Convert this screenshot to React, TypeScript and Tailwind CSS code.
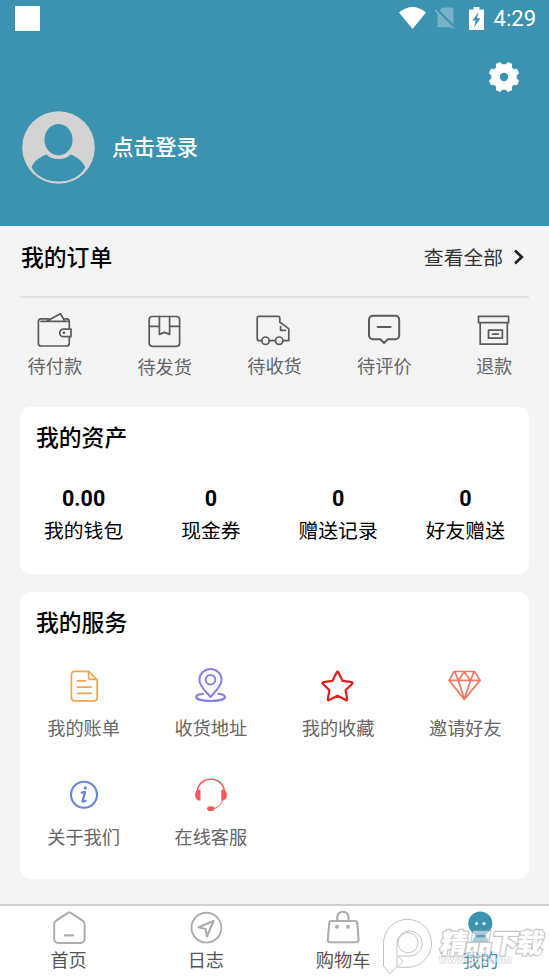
import type { ReactNode } from "react";

type Item = { label: string; icon: ReactNode };

function Icon({ className = "", children }: { className?: string; children: ReactNode }) {
  return (
    <svg
      viewBox="0 0 36 36"
      className={`block size-9 ${className}`}
      fill="none"
      stroke="currentColor"
      strokeWidth="1.7"
      strokeLinejoin="round"
      strokeLinecap="round"
    >
      {children}
    </svg>
  );
}

const orders: Item[] = [
  {
    label: "待付款",
    icon: (
      <Icon>
        <path d="M32.3 17V9.6a2.8 2.8 0 0 0-2.8-2.8H28M12 6.8H4.2a2.8 2.8 0 0 0-2.8 2.8v21.6A2.8 2.8 0 0 0 4.2 34h25.3a2.8 2.8 0 0 0 2.8-2.8v-6.5" />
        <path d="M4 9.4h28.2M9.6 9.2l13.8-7.4 4.4 7.2" />
        <path d="M34 17.1h-7.5a3.8 3.8 0 0 0 0 7.6H34z" />
        <circle cx="26.9" cy="20.8" r="1.3" fill="currentColor" stroke="none" />
      </Icon>
    ),
  },
  {
    label: "待发货",
    icon: (
      <Icon>
        <rect x="2.2" y="4.5" width="30.4" height="29.8" rx="3" />
        <path d="M2.4 14.3h9.9M22.6 14.3h9.9M12.4 4.6v17.8l5.1-2 5.1 2V4.6" />
      </Icon>
    ),
  },
  {
    label: "待收货",
    icon: (
      <Icon>
        <path d="M5.8 28.7H3.2a2 2 0 0 1-2-2V5.9a1.5 1.5 0 0 1 1.5-1.5h19.6a1.5 1.5 0 0 1 1.5 1.5v4.4l8 5.6a2 2 0 0 1 1 1.8v11h-5.8M13.2 28.7h6.3" />
        <circle cx="9.5" cy="28.7" r="3.7" />
        <circle cx="23.2" cy="28.7" r="3.7" />
        <path d="M24.6 14.6v3.7h4.9" />
      </Icon>
    ),
  },
  {
    label: "待评价",
    icon: (
      <Icon>
        <path
          strokeWidth="2"
          d="M7 3.7h22.2a4 4 0 0 1 4 4v15.6a4 4 0 0 1-4 4h-7.4L18.1 31l-3.7-3.7H7a4 4 0 0 1-4-4V7.7a4 4 0 0 1 4-4z"
        />
        <path strokeWidth="2" d="M11.6 15h13" />
      </Icon>
    ),
  },
  {
    label: "退款",
    icon: (
      <Icon>
        <path d="M2.5 4.4h30.1v6.3H2.5zM4.2 10.7v21.5h27.1V10.7" />
        <path d="M12.5 18.2h13.9v8H12.5zM16.6 22.2h5.6" />
      </Icon>
    ),
  },
];

const assets = [
  { value: "0.00", label: "我的钱包" },
  { value: "0", label: "现金券" },
  { value: "0", label: "赠送记录" },
  { value: "0", label: "好友赠送" },
];

const services: Item[] = [
  {
    label: "我的账单",
    icon: (
      <Icon className="text-[#f0a552]">
        <path d="M22.6 3.4H8.4a3 3 0 0 0-3 3v23.4a3 3 0 0 0 3 3h19.8a3 3 0 0 0 3-3V11.8z" />
        <path d="M22.6 3.6v6.2a1.6 1.6 0 0 0 1.6 1.6h6.6M11.4 12.8h8M11.4 19.1h13.8M11.4 25.4h13.8" />
      </Icon>
    ),
  },
  {
    label: "收货地址",
    icon: (
      <Icon className="text-[#8583e8]">
        <path strokeWidth="2" d="M17.5 29C13 23.6 6.4 18 6.4 11.9a11.1 10.8 0 0 1 22.2 0C28.600 18 22 23.600 17.500 29z" />
        <circle cx="17.5" cy="11.7" r="4.8" strokeWidth="2" />
        <path
          strokeWidth="2.2"
          d="M9.8 25.800c-4 .4-6.600 1.700-6.600 3.300 0 2.300 6.400 3.900 14.400 3.900s14.400-1.600 14.400-3.900c0-1.600-2.600-2.900-6.600-3.300"
        />
      </Icon>
    ),
  },
  {
    label: "我的收藏",
    icon: (
      <Icon className="text-[#e11d1d]">
        <path
          strokeWidth="2.2"
          d="M16.7 4.3q.8-1.300 1.600 0l4.200 8.500 9.200 1.400q1.500.4.500 1.600l-6.600 6.500 1.600 8.800q.1 1.500-1.400 1l-8.300-4.300-8.300 4.300q-1.500.5-1.400-1l1.600-8.800-6.600-6.500q-1-1.200.5-1.600l9.200-1.400z"
        />
      </Icon>
    ),
  },
  {
    label: "邀请好友",
    icon: (
      <Icon className="text-[#ef7b67]">
        <path d="M7 3.5h20.4l5.700 8.900-15.800 19L2.200 12.400z" />
        <path d="M2.200 12.400h30.900M7.600 3.700l3.800 8.700 5.900-8.700 6.200 8.700 3.500-8.700M11.400 12.400l5.900 18.600 6.200-18.600" />
      </Icon>
    ),
  },
  {
    label: "关于我们",
    icon: (
      <Icon className="text-[#6484dd]">
        <circle cx="18" cy="17.7" r="13" strokeWidth="2.1" />
        <circle cx="19.3" cy="10.9" r="1.7" fill="currentColor" stroke="none" />
        <path strokeWidth="2.2" d="M15.700 15.600l3.400-.7-2.500 9.200q-.2 1.500 2.900-.3" />
      </Icon>
    ),
  },
  {
    label: "在线客服",
    icon: (
      <Icon className="text-[#f35b5b]">
        <path strokeWidth="1.6" d="M4.300 14.500a13.500 12.200 0 0 1 27 0" />
        <path
          fill="currentColor"
          stroke="none"
          d="M7.500 12.800v10.700H5.300C3.300 22.600 2.100 20.600 2.100 18s1.200-4.600 3.200-5.200zM28.300 12.800v10.700h2.200c2-.9 3.400-2.900 3.400-5.500s-1.400-4.600-3.400-5.200z"
        />
        <path strokeWidth="1" d="M29.200 23c-.7 4.200-3.500 7.200-8 8.500" />
        <ellipse cx="17.8" cy="31.7" rx="3.7" ry="2.4" fill="currentColor" stroke="none" />
      </Icon>
    ),
  },
];

const tabs: Item[] = [
  {
    label: "首页",
    icon: (
      <Icon className="text-[#adadad]">
        <path
          strokeWidth="2"
          d="M16.200 3.300a4 4 0 0 1 4.400 0l11 7.300a4 4 0 0 1 2 3.400v14.900a4 4 0 0 1-4 4H7.200a4 4 0 0 1-4-4V14a4 4 0 0 1 2-3.400z"
        />
        <path strokeWidth="2.2" d="M14 25.300h8" />
      </Icon>
    ),
  },
  {
    label: "日志",
    icon: (
      <Icon className="text-[#adadad]">
        <circle cx="18.4" cy="17.7" r="14.9" strokeWidth="1.9" />
        <path strokeWidth="2.2" d="M25.500 11L10.700 17.300l6.900 1.700 1.300 7.500z" />
      </Icon>
    ),
  },
  {
    label: "购物车",
    icon: (
      <Icon className="text-[#adadad]">
        <path
          strokeWidth="2.100"
          d="M6.300 11h24a2 2 0 0 1 2 1.800l1.300 17.200a2 2 0 0 1-2 2.200H4.800a2 2 0 0 1-2-2.200l1.500-17.200a2 2 0 0 1 2-1.800z"
        />
        <path strokeWidth="2.100" d="M12.300 11V7.300a5.600 5.600 0 0 1 11.200 0V11" />
        <circle cx="12" cy="16.800" r="2" fill="currentColor" stroke="none" />
        <circle cx="23" cy="16.800" r="2" fill="currentColor" stroke="none" />
      </Icon>
    ),
  },
  {
    label: "我的",
    icon: (
      <Icon className="text-[#3b93b0]">
        <circle cx="18.300" cy="13.400" r="12" fill="currentColor" stroke="none" />
        <path
          fill="currentColor"
          stroke="none"
          d="M12.500 23h11.600v3.500l2 3.500q.4 1.600-1.200 1.600H11.800q-1.600 0-1.200-1.600l1.900-3.500z"
        />
        <circle cx="14.500" cy="13.600" r="1.600" fill="#e4f6fc" stroke="none" />
        <circle cx="22" cy="13.600" r="1.600" fill="#e4f6fc" stroke="none" />
      </Icon>
    ),
  },
];

// eight teeth, each a short outer edge between two root points
const gearPoints = Array.from({ length: 8 }, (_, i) => {
  const mid = 22.5 + i * 45;
  return [
    [mid - 15, 12.3],
    [mid - 8, 15],
    [mid + 8, 15],
    [mid + 15, 12.3],
  ]
    .map(([deg, r]) => {
      const a = (deg * Math.PI) / 180;
      return `${(15 + r * Math.cos(a)).toFixed(2)},${(15 + r * Math.sin(a)).toFixed(2)}`;
    })
    .join(" ");
}).join(" ");

function StatusBar() {
  return (
    <div className="flex h-9 items-center pl-[15px] pr-[13px]">
      <div className="size-[25px] bg-white" />
      <svg viewBox="0 0 27 22" className="ml-auto h-[22px] w-[27px]" fill="white">
        <path d="M0 5.500Q13.500-5.500 27 5.500L13.500 22z" />
      </svg>
      <svg viewBox="0 0 20 22" className="ml-[9px] h-[22px] w-5">
        <path d="M7.500.5h9a2 2 0 0 1 2 2v17.700h-16V5.500z" fill="#76b3c8" />
        <path d="M.5 1.500l19.500 19.500" stroke="#3b93b0" strokeWidth="3" />
        <path d="M0 3l18.500 18.500" stroke="#76b3c8" strokeWidth="1.700" />
      </svg>
      <svg viewBox="0 0 15 23" className="ml-[14px] h-[23px] w-[15px]">
        <path d="M4.500 0h6v2.500H15V23H0V2.500h4.500z" fill="white" />
        <path d="M9.500 5L3.500 13.500h3.300L5 20.500l6.500-9.300H8z" fill="#3b93b0" />
      </svg>
      <span className="ml-[10px] pt-0.5 font-[Roboto] text-[22px] leading-none text-white">4:29</span>
    </div>
  );
}

function Header() {
  return (
    <header className="h-[226px] bg-[#3b93b0]">
      <StatusBar />
      <div className="flex justify-end pr-[30px] pt-[26px]">
        <svg viewBox="0 0 30 30" className="size-[30px]">
          <polygon points={gearPoints} fill="white" stroke="white" strokeWidth="1" strokeLinejoin="round" />
          <circle cx="15" cy="15" r="4.200" fill="#3b93b0" />
        </svg>
      </div>
      <div className="flex items-center pl-[22px] pt-[19px]">
        <svg viewBox="0 0 73 73" className="size-[73px]">
          <circle cx="36.500" cy="36.500" r="36.300" fill="#d3d3d3" />
          <ellipse cx="36.500" cy="28.700" rx="14" ry="15.800" fill="#3b93b0" />
          <path
            d="M24.500 43.500C17 46 11 51.500 9.600 56.500 15 66 25 70.500 36.500 70.500S58 66 63.200 56.500C61.500 51.500 56 46 48.500 43.500 43.500 49.500 29.500 49.500 24.500 43.500z"
            fill="#3b93b0"
          />
        </svg>
        <span className="ml-[17px] pb-[3px] text-[21.5px] font-medium leading-8 text-white">点击登录</span>
      </div>
    </header>
  );
}

function Watermark() {
  return (
    <svg viewBox="0 0 174 71" className="pointer-events-none absolute bottom-0 right-0 h-[71px] w-[174px]">
      <g fill="#ffffff" fillOpacity="0.6" stroke="#c4c4c4" strokeWidth="1">
        <path d="M8.500 61V38.500a24 24 0 1 1 24.500 23.800H22.500l5.500-6-5-5.200h10.500a12.600 12.600 0 1 0-11.500-12.600V61l-7 8z" />
        <circle cx="33" cy="37.700" r="10" />
      </g>
      <g opacity="0.550" fill="#ffffff" stroke="#9a9a9a" strokeLinejoin="round" className="[paint-order:stroke]">
        <text x="64" y="58" fontSize="10" fontWeight="700" strokeWidth="1">
          www.jpxz.com
        </text>
        <g transform="translate(64 48) skewX(-10)">
          <text fontSize="27" fontWeight="900" strokeWidth="2.400" textLength="103">
            精品下载
          </text>
        </g>
      </g>
    </svg>
  );
}

export default function App() {
  return (
    <div className="relative flex h-[976px] w-[549px] flex-col overflow-hidden bg-[#f4f4f4] font-['Noto_Sans_CJK_SC',sans-serif] text-black">
      <Header />

      {/* Orders */}
      <section className="h-[181px]">
        <div className="mx-5 flex h-[72px] items-center justify-between border-b-2 border-[#e2e2e2] pb-[9px]">
          <h2 className="pl-px text-[22.8px] font-medium leading-8">我的订单</h2>
          <div className="flex items-center text-[19.8px] text-[#333]">
            查看全部
            <svg viewBox="0 0 12 16" className="ml-[10px] mr-1 h-4 w-3" fill="none" stroke="#222" strokeWidth="2.700">
              <path d="M2 1.500L8.800 8 2 14.500" />
            </svg>
          </div>
        </div>
        <div className="grid grid-cols-5 pt-[14px] text-[#5b5b5b]">
          {orders.map((item) => (
            <div key={item.label} className="flex flex-col items-center">
              {item.icon}
              <span
                className={`text-[18.2px] leading-7 text-[#666] ${item.label === "待发货" ? "mt-1" : "mt-[3px]"}`}
              >
                {item.label}
              </span>
            </div>
          ))}
        </div>
      </section>

      {/* Assets */}
      <section className="mx-5 h-[167px] rounded-[11px] bg-white pt-[14px]">
        <h2 className="pl-4 text-[22.8px] font-medium leading-8">我的资产</h2>
        <div className="mt-[30px] grid grid-cols-4 text-center">
          {assets.map((item) => (
            <div key={item.label}>
              <div className="pt-px font-[Roboto] text-[21.5px] font-bold leading-[30px]">{item.value}</div>
              <div className="text-[19.8px] leading-8">{item.label}</div>
            </div>
          ))}
        </div>
      </section>

      {/* Services */}
      <section className="mx-5 mt-[18px] h-[287px] rounded-[11px] bg-white pt-[14px]">
        <h2 className="pl-4 text-[22.8px] font-medium leading-8">我的服务</h2>
        <div className="mt-[30px] grid grid-cols-4 gap-y-9">
          {services.map((item) => (
            <div key={item.label} className="flex flex-col items-center">
              {item.icon}
              <span className="mt-[9px] text-[18.2px] leading-7 text-[#666]">{item.label}</span>
            </div>
          ))}
        </div>
      </section>

      {/* Tab bar */}
      <nav className="mt-auto grid h-[72px] grid-cols-4 border-t-2 border-[#d0d0d0] bg-white pt-1">
        {tabs.map((tab) => (
          <div key={tab.label} className="flex flex-col items-center">
            {tab.icon}
            <span
              className={`-mt-px text-[18.2px] leading-7 ${tab.label === "我的" ? "text-[#3b93b0]" : "text-[#555]"}`}
            >
              {tab.label}
            </span>
          </div>
        ))}
      </nav>

      <Watermark />
    </div>
  );
}
